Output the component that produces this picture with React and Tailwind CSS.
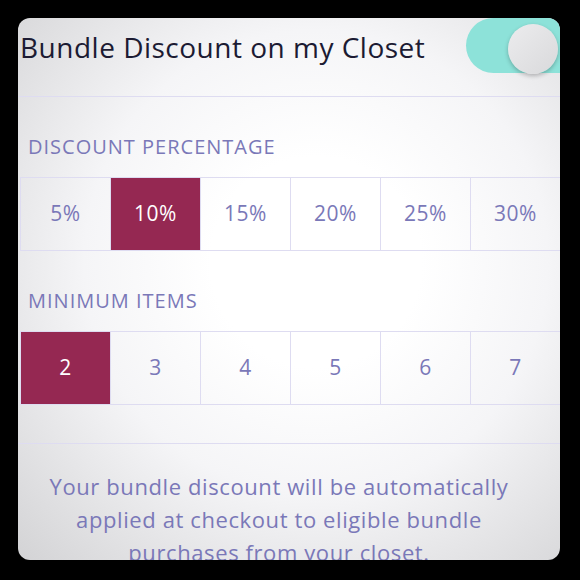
import React, { useState } from "react";

const PERCENTS = ["5%", "10%", "15%", "20%", "25%", "30%"];
const ITEMS = ["2", "3", "4", "5", "6", "7"];

const OptionRow = ({ options, value, onSelect }) => (
  <div className="ml-[2px] grid w-[540px] grid-cols-6 border-y border-[#dedcf1]">
    {options.map((opt) => {
      const active = opt === value;
      return (
        <button
          key={opt}
          type="button"
          onClick={() => onSelect(opt)}
          className={`flex h-[72px] items-center justify-center border-l border-[#dedcf1] text-[21px] tracking-[0.5px] ${
            active ? "bg-[#952852] text-white" : "text-[#7a78b8]"
          }`}
        >
          {opt}
        </button>
      );
    })}
  </div>
);

export default function App() {
  const [percent, setPercent] = useState("10%");
  const [items, setItems] = useState("2");
  const [enabled, setEnabled] = useState(true);

  return (
    <div className="h-[580px] w-[580px] bg-black pt-[18px] pl-[18px] font-['Open_Sans','Lato',sans-serif]">
      <div className="h-[542px] w-[542px] overflow-hidden rounded-[12px] bg-[radial-gradient(ellipse_at_55%_45%,#ffffff_25%,#f5f5f7_55%,#d3d3d5_100%)]">
        <div className="flex h-[79px] items-start justify-between border-b border-[#dedcf1]">
          <h1 className="ml-[2px] mt-[11px] whitespace-nowrap text-[28px] leading-[36px] tracking-[0.5px] text-[#1c1b33]">
            Bundle Discount on my Closet
          </h1>
          <button
            type="button"
            onClick={() => setEnabled(!enabled)}
            className="relative h-[55px] w-[94px] shrink-0 rounded-l-full bg-[#8de2d9]"
          >
            <span className="absolute right-[2px] top-[6px] h-[50px] w-[50px] rounded-full bg-[linear-gradient(135deg,#ececee,#d9d9db)] shadow-[0_2px_4px_rgba(0,0,0,0.25)]" />
          </button>
        </div>

        <p className="ml-[10px] mt-[38px] text-[20px] leading-[24px] tracking-[1px] text-[#7a78b8]">
          DISCOUNT PERCENTAGE
        </p>
        <div className="mt-[18px]">
          <OptionRow options={PERCENTS} value={percent} onSelect={setPercent} />
        </div>

        <p className="ml-[10px] mt-[38px] text-[20px] leading-[24px] tracking-[1px] text-[#7a78b8]">
          MINIMUM ITEMS
        </p>
        <div className="mt-[18px]">
          <OptionRow options={ITEMS} value={items} onSelect={setItems} />
        </div>

        <div className="mt-[38px] border-t border-[#dedcf1] pl-[24px] pr-[44px] pt-[26px] text-center text-[22px] leading-[33px] tracking-[0.6px] text-[#7a78b8]">
          Your bundle discount will be automatically applied at checkout to
          eligible bundle purchases from your closet.
        </div>
      </div>
    </div>
  );
}
